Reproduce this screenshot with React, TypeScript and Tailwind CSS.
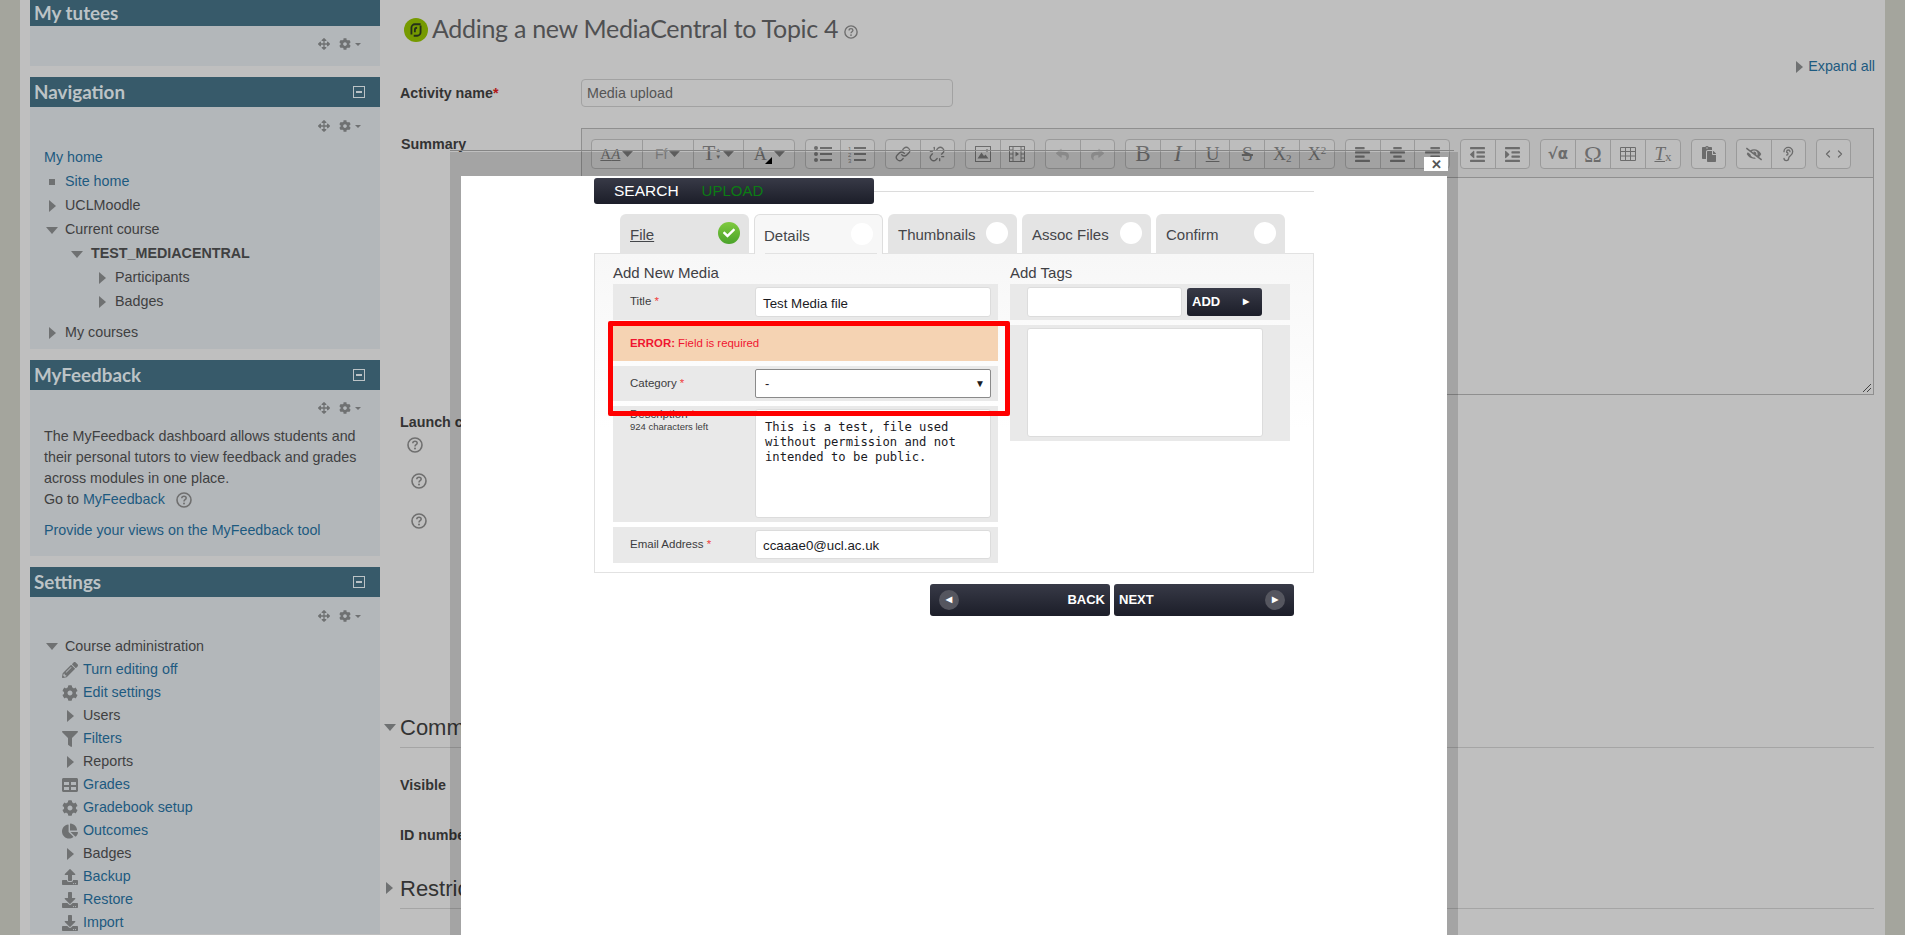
import type { ReactNode } from "react";
import {
  FaAlignCenter,
  FaAlignLeft,
  FaAlignRight,
  FaCog,
  FaFilter,
  FaIndent,
  FaOutdent,
  FaPaste,
  FaPencilAlt,
  FaTable,
  FaEyeSlash,
  FaArrowsAlt,
  FaReply,
  FaShare,
  FaChartPie,
  FaUpload,
  FaDownload,
  FaCheck,
} from "react-icons/fa";
import { ChevronLeft, ChevronRight, Ear, Link, Unlink } from "lucide-react";

const TriRight = ({ className = "" }: { className?: string }) => (
  <svg width="7" height="12" viewBox="0 0 7 12" className={className}>
    <polygon points="0,0 7,6 0,12" fill="#6f7172" />
  </svg>
);

const TriDown = ({ className = "" }: { className?: string }) => (
  <svg width="12" height="7" viewBox="0 0 12 7" className={className}>
    <polygon points="0,0 12,0 6,7" fill="#6f7172" />
  </svg>
);

const Help = ({ size = 16 }: { size?: number }) => (
  <svg width={size} height={size} viewBox="0 0 16 16">
    <circle cx="8" cy="8" r="7" fill="none" stroke="#6f6f6f" strokeWidth="1.6" />
    <path d="M5.8 6.2c0-1.3 1-2 2.2-2s2.2.8 2.2 1.9c0 1.600-2.200 1.600-2.200 3.300" fill="none" stroke="#6f6f6f" strokeWidth="1.500" />
    <circle cx="8" cy="11.500" r="1" fill="#6f6f6f" />
  </svg>
);

const Controls = () => (
  <div className="flex h-[18px] items-center justify-end pr-[19px]">
    <FaArrowsAlt className="text-[12px] text-[#6f7172]" />
    <FaCog className="ml-[9px] text-[12px] text-[#6f7172]" />
    <svg width="6" height="3" viewBox="0 0 6 3" className="ml-[4px]">
      <polygon points="0,0 6,0 3,3" fill="#6f7172" />
    </svg>
  </div>
);

const Block = ({ title, children, first }: { title: string; children: ReactNode; first?: boolean }) => (
  <div className="mb-[11px] bg-[#b3b7ba]">
    <div
      className={`flex items-center justify-between bg-[#375a6a] pl-[4px] pr-[15px] font-['Lato',sans-serif] text-[18.800px] font-bold text-[#bcc3c6] ${
        first ? "h-[26px] leading-[22px]" : "h-[30px]"
      }`}
    >
      <span>{title}</span>
      {!first && (
        <span className="flex h-[12px] w-[12px] items-center justify-center border border-[#bcc3c6] bg-[#375a6a]">
          <span className="h-[2px] w-[6px] bg-[#bcc3c6]" />
        </span>
      )}
    </div>
    {children}
  </div>
);

const NavRow = ({
  label,
  pad,
  gap,
  icon,
  link,
  bold,
  h = "h-[24px]",
}: {
  label: string;
  pad: string;
  gap: string;
  icon?: ReactNode;
  link?: boolean;
  bold?: boolean;
  h?: string;
}) => (
  <div className={`flex items-center ${h} ${pad}`}>
    <span className={`flex w-[16px] items-center justify-center ${gap}`}>{icon}</span>
    <span className={`${link ? "text-[#1d5a80]" : "text-[#3f4041]"} ${bold ? "font-bold" : ""}`}>{label}</span>
  </div>
);

const settingsIcon = "text-[16px] text-[#6f7172]";

const TB = ({ w, children }: { w: string; children: ReactNode }) => (
  <div className={`flex h-full items-center justify-center border-l border-[#9a9a9a] text-[#6c6c6c] first:border-l-0 ${w}`}>
    {children}
  </div>
);

const TGroup = ({ w, children }: { w: string; children: ReactNode }) => (
  <div className={`flex h-[30px] rounded-[4px] border border-[#9a9a9a] bg-[#bdbdbd] ${w}`}>{children}</div>
);

const serif = "font-['Liberation_Serif',serif]";

const Caret = () => (
  <svg width="11" height="6" viewBox="0 0 11 6" className="ml-[2px]">
    <polygon points="0,0 11,0 5.500,6" fill="#6c6c6c" />
  </svg>
);

const BulletList = () => (
  <svg width="18" height="16" viewBox="0 0 18 16" fill="#6c6c6c">
    <circle cx="2" cy="2" r="2" />
    <circle cx="2" cy="8" r="2" />
    <circle cx="2" cy="14" r="2" />
    <rect x="6" y="1" width="12" height="2" />
    <rect x="6" y="7" width="12" height="2" />
    <rect x="6" y="13" width="12" height="2" />
  </svg>
);

const NumList = () => (
  <svg width="18" height="18" viewBox="0 0 18 18" fill="#6c6c6c">
    <text x="0" y="5.500" fontSize="6" fontFamily="Liberation Sans">1</text>
    <text x="0" y="11.500" fontSize="6" fontFamily="Liberation Sans">2</text>
    <text x="0" y="17.500" fontSize="6" fontFamily="Liberation Sans">3</text>
    <rect x="6" y="2" width="12" height="2" />
    <rect x="6" y="8" width="12" height="2" />
    <rect x="6" y="14" width="12" height="2" />
  </svg>
);

const ImageIcon = () => (
  <svg width="16" height="16" viewBox="0 0 16 16">
    <rect x="0.500" y="0.500" width="15" height="15" fill="none" stroke="#6c6c6c" />
    <polygon points="2.500,12.500 6.500,6.500 9,10 10.500,8.500 13.500,12.500" fill="#6c6c6c" />
    <circle cx="12" cy="4.500" r="1.200" fill="#6c6c6c" />
  </svg>
);

const FilmIcon = () => (
  <svg width="16" height="16" viewBox="0 0 16 16" fill="none" stroke="#6c6c6c">
    <rect x="0.500" y="0.500" width="15" height="15" />
    <path d="M4 0.500v15M12 0.500v15M0.500 4H4M0.500 8H4M0.500 12H4M12 4h3.500M12 8h3.500M12 12h3.500" />
    <polygon points="6.500,5.500 10,8 6.500,10.500" fill="#6c6c6c" stroke="none" />
  </svg>
);

const GridIcon = () => (
  <svg width="16" height="14" viewBox="0 0 16 14" fill="none" stroke="#6c6c6c">
    <path d="M.5.500h15v13H.500zM.5 4.500h15M.5 9h15M5.500.5v13M10.500.5v13" />
  </svg>
);

const Toolbar = () => (
  <div className="flex h-[49px] items-start gap-[10px] border-b border-[#8f8f8f] bg-[#b8b8b8] pl-[9px] pt-[10px]">
    <TGroup w="w-[204px]">
      <TB w="flex-1">
        <span className={`${serif} text-[15px] underline`}>
          A<span className="italic">A</span>
        </span>
        <Caret />
      </TB>
      <TB w="flex-1">
        <span className="text-[14px] text-[#8a8a8a]">Ff</span>
        <Caret />
      </TB>
      <TB w="flex-1">
        <span className={`${serif} text-[21px]`}>T</span>
        <span className="text-[6px] leading-[7px]">▲<br />▼</span>
        <Caret />
      </TB>
      <TB w="flex-1">
        <span className={`${serif} text-[18px]`}>A</span>
        <span className="-ml-[2px] mt-[12px] h-0 w-0 border-b-[7px] border-l-[7px] border-b-black border-l-transparent" />
        <Caret />
      </TB>
    </TGroup>
    <TGroup w="w-[70px]">
      <TB w="flex-1"><BulletList /></TB>
      <TB w="flex-1"><NumList /></TB>
    </TGroup>
    <TGroup w="w-[70px]">
      <TB w="flex-1"><Link size={16} /></TB>
      <TB w="flex-1"><Unlink size={16} /></TB>
    </TGroup>
    <TGroup w="w-[70px]">
      <TB w="flex-1"><ImageIcon /></TB>
      <TB w="flex-1"><FilmIcon /></TB>
    </TGroup>
    <TGroup w="w-[70px]">
      <TB w="flex-1"><FaReply className="text-[13px] text-[#a0a0a0]" /></TB>
      <TB w="flex-1"><FaShare className="text-[13px] text-[#a0a0a0]" /></TB>
    </TGroup>
    <TGroup w="w-[210px]">
      <TB w="flex-1"><span className={`${serif} text-[23px]`}>B</span></TB>
      <TB w="flex-1"><span className={`${serif} text-[23px] italic`}>I</span></TB>
      <TB w="flex-1"><span className={`${serif} text-[19px] underline`}>U</span></TB>
      <TB w="flex-1"><span className={`${serif} text-[20px] line-through`}>S</span></TB>
      <TB w="flex-1"><span className={`${serif} text-[18px]`}>X<sub className="text-[11px]">2</sub></span></TB>
      <TB w="flex-1"><span className={`${serif} text-[18px]`}>X<sup className="text-[11px]">2</sup></span></TB>
    </TGroup>
    <TGroup w="w-[105px]">
      <TB w="flex-1"><FaAlignLeft className="text-[17px]" /></TB>
      <TB w="flex-1"><FaAlignCenter className="text-[17px]" /></TB>
      <TB w="flex-1"><FaAlignRight className="text-[17px]" /></TB>
    </TGroup>
    <TGroup w="w-[70px]">
      <TB w="flex-1"><FaOutdent className="text-[17px]" /></TB>
      <TB w="flex-1"><FaIndent className="text-[17px]" /></TB>
    </TGroup>
    <TGroup w="w-[141px]">
      <TB w="flex-1"><span className="font-['DejaVu_Sans',sans-serif] text-[15px] font-bold">√α</span></TB>
      <TB w="flex-1"><span className={`${serif} text-[24px]`}>Ω</span></TB>
      <TB w="flex-1"><GridIcon /></TB>
      <TB w="flex-1"><span className={`${serif} text-[19px] italic underline`}>T</span><span className={`${serif} mt-[6px] text-[13px]`}>x</span></TB>
    </TGroup>
    <TGroup w="w-[35px]">
      <TB w="flex-1"><FaPaste className="text-[16px]" /></TB>
    </TGroup>
    <TGroup w="w-[70px]">
      <TB w="flex-1"><FaEyeSlash className="text-[16px]" /></TB>
      <TB w="flex-1"><Ear size={16} /></TB>
    </TGroup>
    <TGroup w="w-[35px]">
      <TB w="flex-1">
        <ChevronLeft size={12} strokeWidth={2.500} />
        <ChevronRight size={12} strokeWidth={2.500} />
      </TB>
    </TGroup>
  </div>
);

const darkBtn = "bg-gradient-to-b from-[#383a47] to-[#1c1e29] text-white";

const Tab = ({ label, active, done, w }: { label: string; active?: boolean; done?: boolean; w: string }) => (
  <div
    className={`relative z-10 -mb-px flex h-[40px] items-center justify-between rounded-t-[6px] pr-[9px] text-[15px] text-[#44464a] ${w} ${
      active ? "border-x border-t border-[#dedede] bg-[#f7f7f7] pl-[9px]" : "bg-[#e4e4e4] pl-[10px]"
    }`}
  >
    <span className={`mt-[3px] ${done ? "underline" : ""}`}>{label}</span>
    {done ? (
      <span className="-mt-[2px] flex h-[22px] w-[22px] items-center justify-center rounded-full bg-gradient-to-b from-[#7fca3f] to-[#4aa32a]">
        <FaCheck className="text-[12px] text-white" />
      </span>
    ) : (
      <span className="-mt-[2px] h-[22px] w-[22px] rounded-full bg-white" />
    )}
    {active && <span className="absolute bottom-0 left-[10px] right-[5px] h-px bg-[#e2e2e2]" />}
  </div>
);

const Req = () => <span className="text-[#f04040]"> *</span>;

const FormRow = ({
  label,
  h,
  hint,
  top = "pt-[8px]",
  children,
}: {
  label: string;
  h: string;
  hint?: string;
  top?: string;
  children: ReactNode;
}) => (
  <div className={`flex bg-[#e9e9e9] pt-[3px] ${h}`}>
    <div className="w-[142px] pl-[17px] text-[11.500px] leading-[13px] text-[#3c3c40]">
      <div className={top}>
        {label}
        <Req />
      </div>
      {hint && <div className="text-[9.500px] leading-[11px]">{hint}</div>}
    </div>
    {children}
  </div>
);

const inputCls = "w-[236px] rounded-[3px] border border-[#dcdcdc] bg-white pl-[7px] pt-[3px] text-[13.300px] text-[#1b1b1f]";

export default function App() {
  return (
    <div className="relative h-[935px] w-[1905px] overflow-hidden bg-[#a4a59d] font-['Liberation_Sans',Arial,sans-serif] text-[14.300px]">
      <div className="flex h-full px-[20px]">
        <div className="h-full w-[360px] bg-[#bfbfbf] pl-[10px]">
          <Block title="My tutees" first>
            <div className="h-[40px] pt-[9px]">
              <Controls />
            </div>
          </Block>

          <Block title="Navigation">
            <div className="pb-[4px] pt-[10px]">
              <Controls />
              <div className="mt-[11px]">
                <div className="flex h-[24px] items-center pl-[14px] text-[#1d5a80]">My home</div>
                <NavRow label="Site home" link pad="pl-[14px]" gap="mr-[5px]" icon={<span className="h-[6px] w-[6px] bg-[#6f7172]" />} />
                <NavRow label="UCLMoodle" pad="pl-[14px]" gap="mr-[5px]" icon={<TriRight />} />
                <NavRow label="Current course" pad="pl-[14px]" gap="mr-[5px]" icon={<TriDown />} />
                <NavRow label="TEST_MEDIACENTRAL" bold pad="pl-[39px]" gap="mr-[6px]" icon={<TriDown />} />
                <NavRow label="Participants" pad="pl-[64px]" gap="mr-[5px]" icon={<TriRight />} />
                <NavRow label="Badges" pad="pl-[64px]" gap="mr-[5px]" icon={<TriRight />} />
                <div className="mt-[7px]">
                  <NavRow label="My courses" pad="pl-[14px]" gap="mr-[5px]" icon={<TriRight />} />
                </div>
              </div>
            </div>
          </Block>

          <Block title="MyFeedback">
            <div className="pb-[15px] pt-[9px]">
              <Controls />
              <div className="mt-[9px] pl-[14px] leading-[21px] text-[#3f4041]">
                The MyFeedback dashboard allows students and
                <br />
                their personal tutors to view feedback and grades
                <br />
                across modules in one place.
                <br />
                <span className="inline-flex items-center">
                  Go to&nbsp;<span className="text-[#1d5a80]">MyFeedback</span>
                  <span className="ml-[11px] inline-flex">
                    <Help />
                  </span>
                </span>
              </div>
              <div className="mt-[10px] pl-[14px] leading-[21px] text-[#1d5a80]">Provide your views on the MyFeedback tool</div>
            </div>
          </Block>

          <Block title="Settings">
            <div className="pt-[10px]">
              <Controls />
              <div className="mt-[10px]">
                <NavRow h="h-[23px]" label="Course administration" pad="pl-[14px]" gap="mr-[5px]" icon={<TriDown />} />
                <NavRow h="h-[23px]" label="Turn editing off" link pad="pl-[32px]" gap="mr-[5px]" icon={<FaPencilAlt className={settingsIcon} />} />
                <NavRow h="h-[23px]" label="Edit settings" link pad="pl-[32px]" gap="mr-[5px]" icon={<FaCog className={settingsIcon} />} />
                <NavRow h="h-[23px]" label="Users" pad="pl-[32px]" gap="mr-[5px]" icon={<TriRight />} />
                <NavRow h="h-[23px]" label="Filters" link pad="pl-[32px]" gap="mr-[5px]" icon={<FaFilter className={settingsIcon} />} />
                <NavRow h="h-[23px]" label="Reports" pad="pl-[32px]" gap="mr-[5px]" icon={<TriRight />} />
                <NavRow h="h-[23px]" label="Grades" link pad="pl-[32px]" gap="mr-[5px]" icon={<FaTable className={settingsIcon} />} />
                <NavRow h="h-[23px]" label="Gradebook setup" link pad="pl-[32px]" gap="mr-[5px]" icon={<FaCog className={settingsIcon} />} />
                <NavRow h="h-[23px]" label="Outcomes" link pad="pl-[32px]" gap="mr-[5px]" icon={<FaChartPie className={settingsIcon} />} />
                <NavRow h="h-[23px]" label="Badges" pad="pl-[32px]" gap="mr-[5px]" icon={<TriRight />} />
                <NavRow h="h-[23px]" label="Backup" link pad="pl-[32px]" gap="mr-[5px]" icon={<FaUpload className={settingsIcon} />} />
                <NavRow h="h-[23px]" label="Restore" link pad="pl-[32px]" gap="mr-[5px]" icon={<FaDownload className={settingsIcon} />} />
                <NavRow h="h-[23px]" label="Import" link pad="pl-[32px]" gap="mr-[5px]" icon={<FaDownload className={settingsIcon} />} />
              </div>
            </div>
          </Block>
        </div>

        <div className="h-full flex-1 bg-[#bfbfbf] pl-[20px] pr-[11px] pt-[16px]">
          <div className="flex h-[28px] items-center">
            <span className="ml-[4px] flex h-[24px] w-[24px] items-center justify-center rounded-full bg-[#769a00]">
              <svg width="16" height="16" viewBox="0 0 14 14" fill="none" stroke="#25301a" strokeWidth="1.600">
                <path d="M3 11V5a3 3 0 0 1 3-3h5" />
                <path d="M11 3v6a3 3 0 0 1-3 3H5" />
                <path d="M6 9V7a2 2 0 0 1 2-2" />
              </svg>
            </span>
            <span className="-mt-[2px] ml-[4px] font-['Lato',sans-serif] text-[25px] tracking-[-0.3px] text-[#4f5052]">
              Adding a new MediaCentral to Topic 4
            </span>
            <span className="ml-[6px] mt-[3px] inline-flex">
              <Help size={14} />
            </span>
          </div>

          <div className="-mr-px mt-[13px] flex h-[20px] items-center justify-end text-[#1d5a80]">
            <TriRight className="mr-[5px]" />
            Expand all
          </div>

          <div className="mt-[2px] flex h-[28px] items-center">
            <div className="w-[181px] pt-px font-bold text-[#333]">
              Activity name<span className="text-[#b01818]">*</span>
            </div>
            <div className="flex h-[28px] w-[372px] items-center rounded-[4px] border border-[#a2a2a2] pl-[5px] pt-px text-[#555]">Media upload</div>
          </div>

          <div className="mt-[21px] flex">
            <div className="w-[181px] pl-px pt-[6px] font-bold text-[#333]">Summary</div>
            <div className="relative h-[267px] flex-1 border border-[#8f8f8f]">
              <Toolbar />
              <svg width="10" height="10" viewBox="0 0 10 10" className="absolute bottom-px right-px">
                <path d="M1 9 9 1M5 9 9 5" stroke="#444" strokeWidth="1" />
              </svg>
            </div>
          </div>

          <div className="mt-[17px] h-[16px] font-bold text-[#333]">Launch container</div>
          <div className="ml-[7px] mt-[9px] h-[16px]">
            <Help />
          </div>
          <div className="ml-[11px] mt-[20px] h-[16px]">
            <Help />
          </div>
          <div className="ml-[11px] mt-[24px] h-[16px]">
            <Help />
          </div>

          <div className="mt-[181px] flex h-[38px] items-center border-b border-[#a5a5a5] pb-[3px] text-[22px] text-[#333]">
            <TriDown className="absolute left-[384px]" />
            Common module settings
          </div>
          <div className="mt-[27px] h-[16px] font-bold text-[#333]">Visible</div>
          <div className="mt-[34px] h-[16px] font-bold text-[#333]">ID number</div>
          <div className="mt-[30px] flex h-[38px] items-center border-b border-[#a5a5a5] pb-[3px] text-[22px] text-[#333]">
            <TriRight className="absolute left-[386px]" />
            Restrict access
          </div>
        </div>
      </div>

      <div className="absolute left-[450px] top-[150px] h-px w-[1004px] bg-[#858585]" />

      <div className="absolute left-[450px] top-[152px] h-[783px] w-[1008px] bg-black/[0.14]">
        <div className="absolute left-[974px] top-[5px] z-20 flex h-[14px] w-[24px] items-center justify-center bg-white text-[13px] font-bold leading-none text-[#555]">
          ✕
        </div>
        <div className="ml-[11px] mt-[24px] h-[759px] w-[986px] bg-white px-[133px] pt-[2px] text-[#333]">
          <div className="flex items-center">
            <div className={`flex h-[26px] w-[280px] items-center rounded-[3px] pl-[20px] text-[15.500px] ${darkBtn}`}>
              <span>SEARCH</span>
              <span className="ml-[23px] text-[15px] text-[#0c7c14]">UPLOAD</span>
            </div>
            <div className="h-px flex-1 bg-[#dcdcdc]" />
          </div>

          <div className="ml-[26px] mt-[10px] flex gap-[5px]">
            <Tab label="File" done w="w-[129px]" />
            <Tab label="Details" active w="w-[129px]" />
            <Tab label="Thumbnails" w="w-[129px]" />
            <Tab label="Assoc Files" w="w-[129px]" />
            <Tab label="Confirm" w="w-[129px]" />
          </div>

          <div className="flex h-[320px] gap-[12px] border border-[#e2e2e2] bg-gradient-to-b from-[#f7f7f7] to-white to-[55%] pl-[18px]">
            <div className="w-[385px]">
              <div className="flex h-[30px] items-end text-[15px] text-[#3f4044]">Add New Media</div>
              <div className="flex flex-col gap-[5px]">
                <FormRow label="Title" h="h-[36px]">
                  <div className={`flex h-[30px] items-center ${inputCls}`}>Test Media file</div>
                </FormRow>
                <div className="flex h-[36px] items-center bg-[#f5d3b3] pl-[17px] pt-px text-[11.400px] text-[#f01530]">
                  <b>ERROR:</b>&nbsp;Field is required
                </div>
                <FormRow label="Category" h="h-[35px]">
                  <div className="flex h-[29px] w-[236px] items-center justify-between rounded-[2px] border border-[#8a8a8a] bg-white pl-[9px] pr-[5px] text-[13px] text-[#1b1b1f]">
                    <span>-</span>
                    <span className="text-[10px]">▼</span>
                  </div>
                </FormRow>
                <FormRow label="Description" hint="924 characters left" top="-mt-[1.500px]" h="h-[116px]">
                  <div className="h-[109px] w-[236px] rounded-[3px] border border-[#dcdcdc] bg-white pl-[9px] pt-[10px] font-['DejaVu_Sans_Mono',monospace] text-[12.200px] leading-[15px] text-[#1b1b1f]">
                    This is a test, file used
                    <br />
                    without permission and not
                    <br />
                    intended to be public.
                  </div>
                </FormRow>
                <FormRow label="Email Address" h="h-[36px]">
                  <div className={`flex h-[29px] items-center ${inputCls}`}>ccaaae0@ucl.ac.uk</div>
                </FormRow>
              </div>
            </div>
            <div className="w-[280px]">
              <div className="flex h-[30px] items-end text-[15px] text-[#3f4044]">Add Tags</div>
              <div className="flex flex-col gap-[5px]">
                <div className="flex h-[36px] items-start bg-[#e9e9e9] pl-[17px] pt-[3px]">
                  <div className="h-[30px] w-[155px] rounded-[3px] border border-[#dcdcdc] bg-white" />
                  <div className={`ml-[5px] mt-px flex h-[28px] w-[75px] items-center justify-between rounded-[3px] pl-[5px] pr-[13px] text-[13px] font-bold ${darkBtn}`}>
                    ADD
                    <span className="text-[8px]">▶</span>
                  </div>
                </div>
                <div className="h-[116px] bg-[#e9e9e9] pl-[17px] pt-[3px]">
                  <div className="h-[109px] w-[236px] rounded-[3px] border border-[#dcdcdc] bg-white" />
                </div>
              </div>
            </div>
          </div>

          <div className="ml-[336px] mt-[11px] flex gap-[4px]">
            <div className={`flex h-[32px] w-[180px] items-center justify-between rounded-[3px] pl-[9px] pr-[5px] text-[13px] font-bold ${darkBtn}`}>
              <span className="flex h-[20px] w-[20px] items-center justify-center rounded-full bg-[#55565f] text-[8px]">◀</span>
              BACK
            </div>
            <div className={`flex h-[32px] w-[180px] items-center justify-between rounded-[3px] pl-[5px] pr-[9px] text-[13px] font-bold ${darkBtn}`}>
              NEXT
              <span className="flex h-[20px] w-[20px] items-center justify-center rounded-full bg-[#55565f] text-[8px]">▶</span>
            </div>
          </div>
        </div>
      </div>

      <div className="absolute left-[608px] top-[321px] h-[95px] w-[402px] rounded-[2px] border-[5px] border-[#ff0000]" />
    </div>
  );
}
